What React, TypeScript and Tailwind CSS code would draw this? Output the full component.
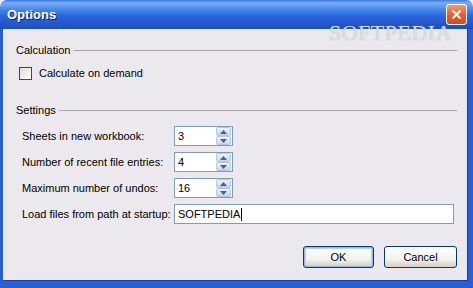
import React from "react";

const font = { fontFamily: '"Liberation Sans", Arial, sans-serif' };

function Spinner({ value }: { value: string }) {
  return (
    <div className="flex h-[20px] w-[59px] items-center border border-[#7f9db9] bg-white">
      <span className="flex-1 pl-[3px] text-[11px] leading-none text-black">{value}</span>
      <div className="mr-[1px] flex h-[18px] w-[15px] flex-col gap-[0px]">
        <div className="flex h-[9px] items-center justify-center rounded-[2px] border border-[#b5c6e6] bg-[linear-gradient(to_bottom,#eef3fd,#c6d4f0)]">
          <svg width="7" height="4" viewBox="0 0 7 4">
            <path d="M0 4 L3.5 0 L7 4 Z" fill="#4d6185" />
          </svg>
        </div>
        <div className="flex h-[9px] items-center justify-center rounded-[2px] border border-[#b5c6e6] bg-[linear-gradient(to_bottom,#eef3fd,#c6d4f0)]">
          <svg width="7" height="4" viewBox="0 0 7 4">
            <path d="M0 0 L3.5 4 L7 0 Z" fill="#4d6185" />
          </svg>
        </div>
      </div>
    </div>
  );
}

function Row({ label, children }: { label: string; children: React.ReactNode }) {
  return (
    <div className="flex h-[20px] items-center">
      <span className="w-[152px] text-[11px] text-black">{label}</span>
      {children}
    </div>
  );
}

function GroupHead({ title }: { title: string }) {
  return (
    <div className="flex h-[14px] items-center gap-[3px]">
      <span className="text-[11px] text-black">{title}</span>
      <div className="h-px flex-1 bg-[#a7a6aa]" />
    </div>
  );
}

function XpButton({ label, primary }: { label: string; primary?: boolean }) {
  return (
    <button
      className={
        "h-[22px] rounded-[3px] border border-[#003c74] bg-[linear-gradient(to_bottom,#ffffff_0%,#f3f3ef_60%,#d6d0c5_100%)] text-[11px] text-black " +
        (primary ? "w-[71px] shadow-[inset_0_0_0_1px_#9cb7e9,inset_0_0_0_2px_#bcd0f2]" : "w-[73px]")
      }
    >
      {label}
    </button>
  );
}

export default function App() {
  return (
    <div className="relative h-[288px] w-[473px] overflow-hidden bg-[#ebe9ed]" style={font}>
      {/* title bar */}
      <div className="relative flex h-[29px] items-center justify-between rounded-t-[7px] bg-[linear-gradient(to_bottom,#3a78e4_0%,#79aef6_10%,#4e8ceb_30%,#2a66dc_55%,#2458cf_80%,#1b4bc0_100%)] pl-[7px] pr-[6px]">
        <span className="text-[13px] font-bold text-white [text-shadow:1px_1px_0_#0a246a]">Options</span>
        <div className="flex h-[21px] w-[21px] items-center justify-center rounded-[3px] border border-white bg-[linear-gradient(to_bottom,#f39a74,#e65f30_50%,#d04a22)]">
          <svg width="11" height="11" viewBox="0 0 11 11">
            <path d="M1.5 1.5 L9.5 9.5 M9.5 1.5 L1.5 9.5" stroke="white" strokeWidth="2.2" />
          </svg>
        </div>
      </div>

      {/* body */}
      <div className="flex h-[259px] flex-col border-x-[3px] border-b-[7px] border-[#2a5fd4] border-r-[5px]">
        <div className="flex flex-1 flex-col pl-[13px] pr-[11px] shadow-[inset_-1px_-1px_0_#1c3f9e]">
          <div className="mt-[14px]">
            <GroupHead title="Calculation" />
          </div>
          <div className="ml-[3px] mt-[10px] flex h-[13px] items-center gap-[7px]">
            <div className="h-[13px] w-[13px] border border-[#1c5180] bg-[linear-gradient(135deg,#dcdcd7,#ffffff)]" />
            <span className="text-[11px] text-black">Calculate on demand</span>
          </div>
          <div className="mt-[23px]">
            <GroupHead title="Settings" />
          </div>
          <div className="ml-[6px] mt-[9px] flex flex-col gap-[6px]">
            <Row label="Sheets in new workbook:">
              <Spinner value="3" />
            </Row>
            <Row label="Number of recent file entries:">
              <Spinner value="4" />
            </Row>
            <Row label="Maximum number of undos:">
              <Spinner value="16" />
            </Row>
            <Row label="Load files from path at startup:">
              <div className="flex h-[20px] w-[280px] items-center border border-[#7f9db9] bg-white pl-[3px]">
                <span className="text-[11px] leading-none text-black">SOFTPEDIA</span>
                <span className="ml-[1px] h-[13px] w-px bg-black" />
              </div>
            </Row>
          </div>
          <div className="mt-[22px] flex justify-end gap-[10px]">
            <XpButton label="OK" primary />
            <XpButton label="Cancel" />
          </div>
        </div>
      </div>

      {/* watermark */}
      <span
        className="pointer-events-none absolute left-[329px] top-[16px] text-[22px] tracking-[0.5px] text-white/60 [text-shadow:0_0_1px_#9aa]"
        style={{ fontFamily: '"Liberation Serif", "Times New Roman", serif' }}
      >
        SOFTPEDIA
      </span>
    </div>
  );
}
